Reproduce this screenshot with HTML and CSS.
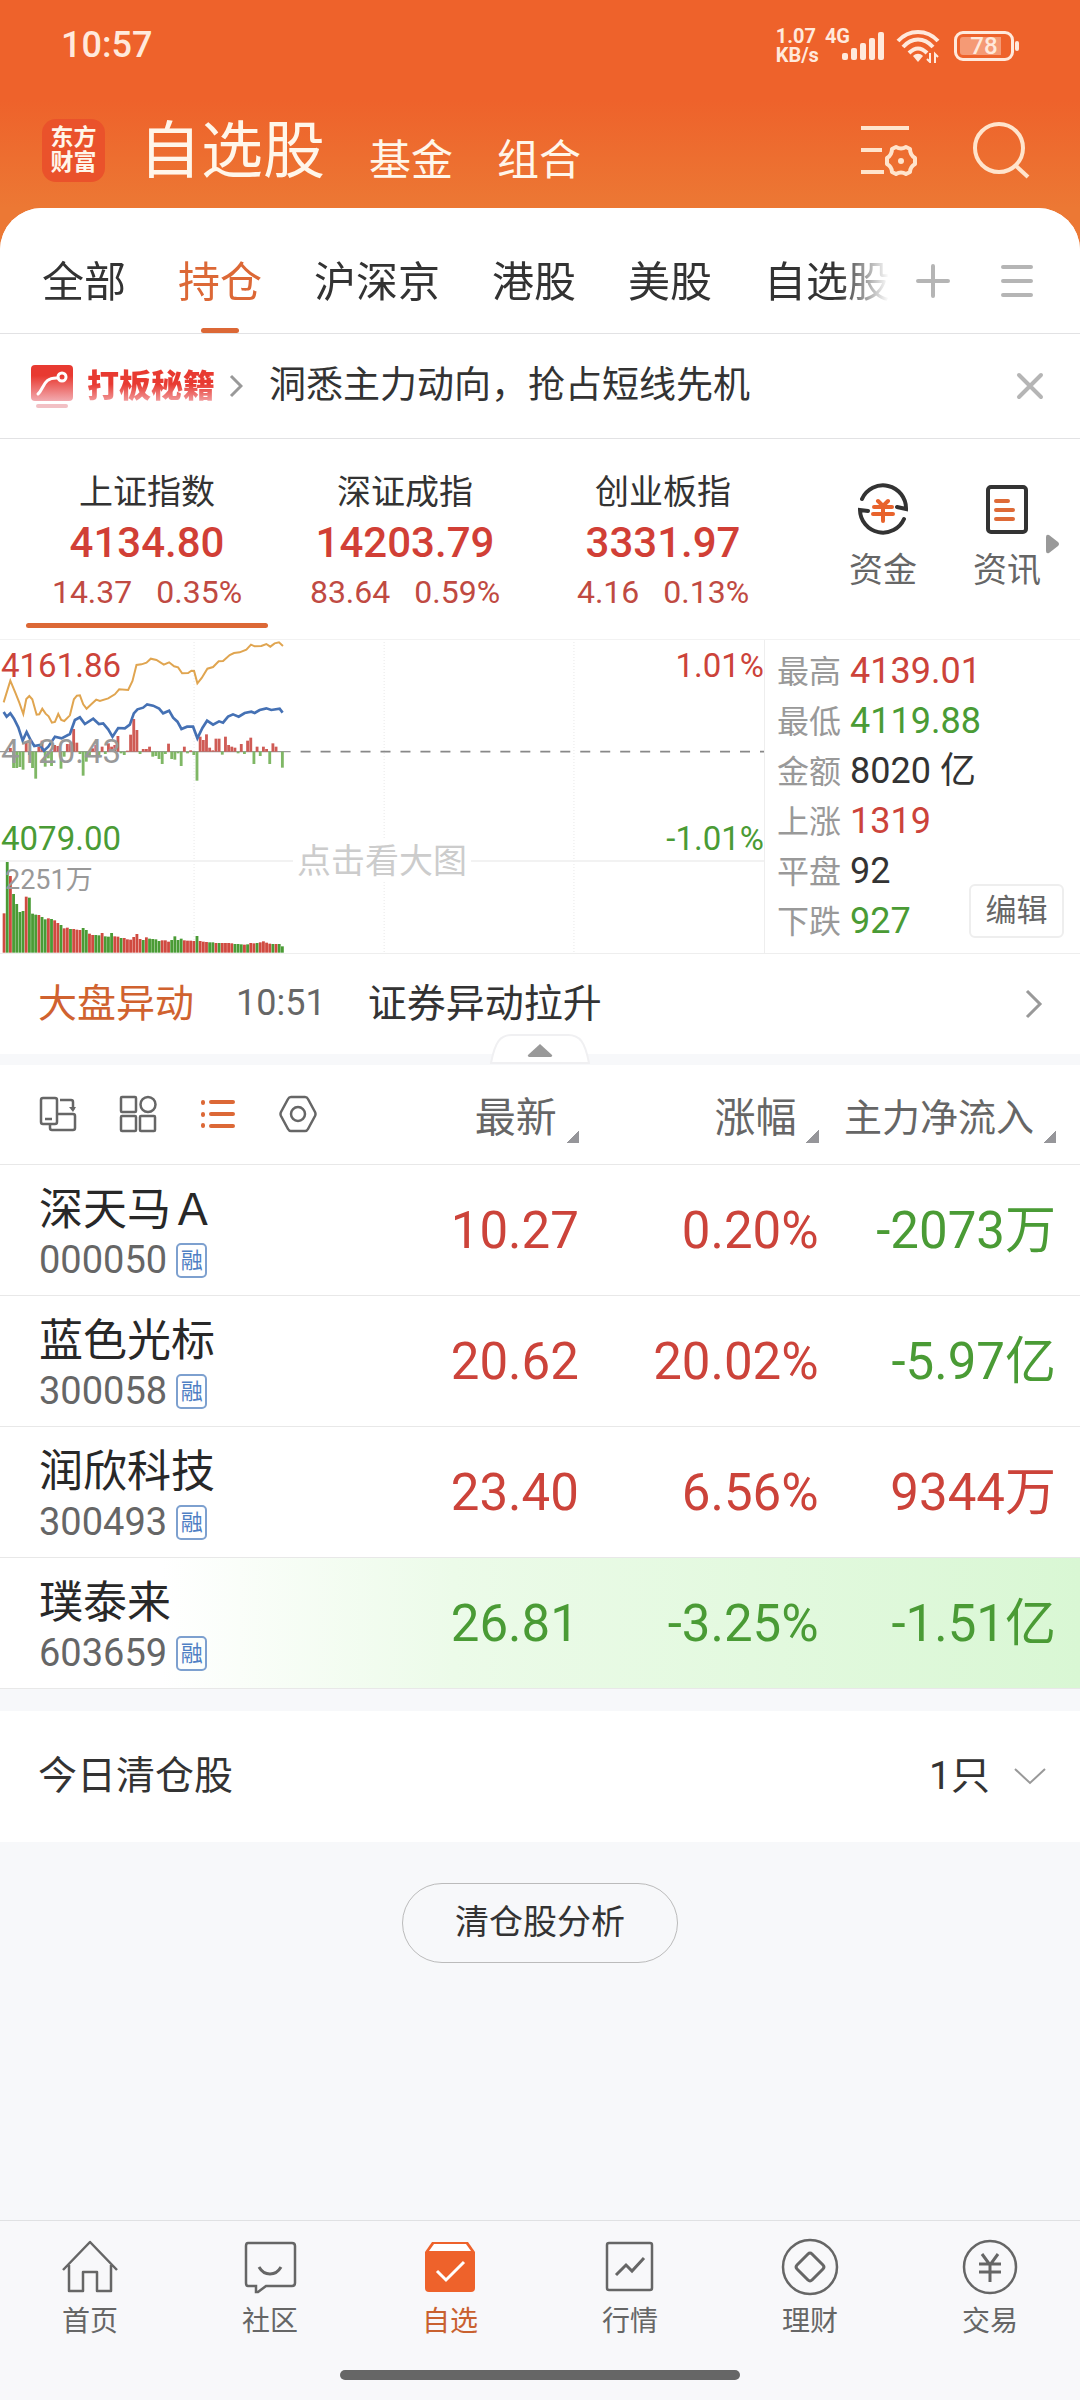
FILE: index.html
```html
<!DOCTYPE html>
<html lang="zh-CN">
<head>
    <meta charset="UTF-8">
    <meta name="viewport" content="width=device-width, initial-scale=1.0">
    <title>自选股</title>
    <link rel="stylesheet" href="styles.css">
</head>
<body>

    <header class="top">
        <div class="status">
            <span class="clock">10:57</span>
            <div class="status-right">
                <span class="speed">1.07<br>KB/s</span>
                <span class="net">4G</span>
                <svg class="signal" width="42" height="28" viewBox="0 0 42 28" fill="currentColor">
                    <rect x="0" y="21" width="6" height="7" rx="2"/>
                    <rect x="9" y="16" width="6" height="12" rx="2"/>
                    <rect x="18" y="11" width="6" height="17" rx="2"/>
                    <rect x="27" y="6" width="6" height="22" rx="2"/>
                    <rect x="36" y="0" width="6" height="28" rx="2"/>
                </svg>
                <svg class="wifi" width="44" height="34" viewBox="0 0 44 34" fill="none" stroke="currentColor" stroke-width="4">
                    <path d="M2 12C13 0 31 0 42 12M7 18C16 8 28 8 37 18M13 24C19 18 25 18 31 24"/>
                    <path d="M17 27C20 24 24 24 27 27L22 33Z" fill="currentColor" stroke="none"/>
                    <path d="M34 24V33L31 30M39 34V25L42 28" stroke-width="2"/>
                </svg>
                <span class="battery"><span class="battery-text">78</span></span>
            </div>
        </div>
        <div class="title-bar">
            <div class="logo">东方<br>财富</div>
            <h1>自选股</h1>
            <a href="#" class="section">基金</a>
            <a href="#" class="section">组合</a>
            <div class="title-actions">
                <button aria-label="设置">
                    <svg width="58" height="52" viewBox="0 0 58 52" fill="none" stroke="currentColor" stroke-width="4">
                        <path d="M1 4H49M1 26H22M1 48H24"/>
                        <path d="M36 23Q41 26 46 23L50 25Q50 31 55 34V40Q50 43 50 48L46 50Q41 47 36 50L32 48Q32 43 27 40V34Q32 31 32 25Z" stroke-linejoin="round"/>
                        <circle cx="41" cy="37" r="3" fill="currentColor" stroke="none"/>
                    </svg>
                </button>
                <button aria-label="搜索">
                    <svg width="58" height="58" viewBox="0 0 58 58" fill="none" stroke="currentColor" stroke-width="4">
                        <circle cx="27" cy="27" r="24"/>
                        <path d="M43 44L56 56"/>
                    </svg>
                </button>
            </div>
        </div>
    </header>

    <main>
        <nav class="tabs">
            <div class="tab-list">
                <a href="#">全部</a>
                <a href="#" class="active">持仓</a>
                <a href="#">沪深京</a>
                <a href="#">港股</a>
                <a href="#">美股</a>
                <a href="#">自选股</a>
            </div>
            <button aria-label="添加">
                <svg width="34" height="34" viewBox="0 0 34 34" stroke="currentColor" stroke-width="4" stroke-linecap="round"><path d="M17 2V32M2 17H32"/></svg>
            </button>
            <button aria-label="菜单">
                <svg width="34" height="34" viewBox="0 0 34 34" stroke="currentColor" stroke-width="4" stroke-linecap="round"><path d="M3 3H31M3 17H31M3 31H31"/></svg>
            </button>
        </nav>

        <div class="promo">
            <svg width="42" height="43" viewBox="0 0 42 43" fill="none">
                <defs>
                    <linearGradient id="promoFill" x1="0" y1="0" x2="0" y2="1">
                        <stop offset="0.3" stop-color="#e83a31"/>
                        <stop offset="1" stop-color="#f2abb0"/>
                    </linearGradient>
                </defs>
                <rect width="42" height="36" rx="4" fill="url(#promoFill)"/>
                <rect x="5" y="39" width="32" height="4" rx="2" fill="#f2c0c4"/>
                <path d="M7 29C13 24 12 12 27 13" stroke="#fff" stroke-width="3" stroke-linecap="round"/>
                <circle cx="31" cy="12" r="4" stroke="#fff" stroke-width="3"/>
            </svg>
            <strong>打板秘籍</strong>
            <svg width="14" height="24" viewBox="0 0 14 24" fill="none" stroke="#999" stroke-width="3"><path d="M2 2L12 12L2 22"/></svg>
            <a href="#">洞悉主力动向，抢占短线先机</a>
            <button aria-label="关闭">
                <svg width="28" height="28" viewBox="0 0 28 28" stroke="currentColor" stroke-width="4" stroke-linecap="round"><path d="M3 3L25 25M25 3L3 25"/></svg>
            </button>
        </div>

        <section class="indices">
            <a href="#" class="index active">
                <span class="index-name">上证指数</span>
                <span class="index-value">4134.80</span>
                <span class="index-change"><span>14.37</span><span>0.35%</span></span>
            </a>
            <a href="#" class="index">
                <span class="index-name">深证成指</span>
                <span class="index-value">14203.79</span>
                <span class="index-change"><span>83.64</span><span>0.59%</span></span>
            </a>
            <a href="#" class="index">
                <span class="index-name">创业板指</span>
                <span class="index-value">3331.97</span>
                <span class="index-change"><span>4.16</span><span>0.13%</span></span>
            </a>
            <div class="shortcuts">
                <a href="#">
                    <svg width="54" height="54" viewBox="0 0 54 54" fill="none" stroke="#333" stroke-width="4">
                        <path d="M6 17A23 23 0 0 1 50 27L41 25M48 37A23 23 0 0 1 4 28L12 29" stroke-linecap="round"/>
                        <path d="M22 19L27 24L32 19M27 24V39M18 25H36M17 32H37" stroke="#e8632c" stroke-linecap="round"/>
                    </svg>
                    资金
                </a>
                <a href="#">
                    <svg width="54" height="54" viewBox="0 0 54 54" fill="none" stroke="#333" stroke-width="4">
                        <rect x="8" y="5" width="38" height="45" rx="3"/>
                        <path d="M16 19H28M16 28H33M16 37H33" stroke="#de6a37" stroke-linecap="round"/>
                    </svg>
                    资讯
                </a>
            </div>
            <svg class="more" width="13" height="20" viewBox="0 0 13 20" fill="#999"><path d="M0 3Q0 0 3 1L12 8Q14 10 12 12L3 19Q0 20 0 17Z"/></svg>
        </section>

        <section class="market">
            <div class="chart">
                <svg id="chart" viewBox="0 30 2295 939" preserveAspectRatio="none" fill="none">
                    <path d="M583 36V966M1154 36V966M1724 36V966" stroke="#e8e8e8" stroke-width="3" stroke-dasharray="3 6"/>
                    <path d="M0 693H2295" stroke="#eee" stroke-width="5"/>
                    <path d="M0 365H873" stroke="#999" stroke-width="4"/>
                    <path d="M873 365H2295" stroke="#888" stroke-width="5" stroke-dasharray="30 30" stroke-dashoffset="30"/>
                    <g id="bars"></g>
                    <polyline stroke="#e0a550" stroke-width="6" points="11,217 31,152 46,188 58,218 70,252 79,207 88,198 97,208 110,254 118,253 127,236 137,251 146,259 156,278 165,276 175,252 184,270 193,273 210,256 222,208 231,197 240,196 250,223 260,236 275,222 289,209 300,213 325,205 345,193 358,178 385,180 398,153 410,105 425,103 440,98 453,86 470,90 492,104 508,97 523,109 535,112 547,130 565,129 575,122 583,123 593,160 606,144 623,116 640,111 657,94 670,93 690,75 703,69 720,67 740,59 754,44 765,49 785,48 800,42 812,50 825,40 838,37 850,48"/>
                    <polyline stroke="#4571b4" stroke-width="8" points="11,246 20,260 31,250 42,266 55,292 68,332 80,306 92,330 103,348 120,345 132,362 145,350 165,320 185,325 210,312 225,270 240,262 255,282 280,266 297,282 310,280 325,298 338,320 355,294 375,295 390,284 402,250 413,238 430,233 442,223 460,227 478,236 490,250 508,242 520,263 533,275 545,297 562,290 580,290 593,325 608,294 622,272 640,284 658,274 670,278 685,260 700,253 717,260 735,249 755,245 765,249 780,240 800,235 815,240 840,236 849,248"/>
                </svg>
                <span class="chart-label high red">4161.86</span>
                <span class="chart-label mid">4120.43</span>
                <span class="chart-label low green">4079.00</span>
                <span class="chart-label high right red">1.01%</span>
                <span class="chart-label low right green">-1.01%</span>
                <span class="chart-volume">2251万</span>
                <button class="chart-open">点击看大图</button>
            </div>
            <div class="stats">
                <dl>
                    <div><dt>最高</dt><dd class="red">4139.01</dd></div>
                    <div><dt>最低</dt><dd class="green">4119.88</dd></div>
                    <div><dt>金额</dt><dd>8020 亿</dd></div>
                    <div><dt>上涨</dt><dd class="red">1319</dd></div>
                    <div><dt>平盘</dt><dd>92</dd></div>
                    <div><dt>下跌</dt><dd class="green">927</dd></div>
                </dl>
                <button class="edit">编辑</button>
            </div>
        </section>

        <a href="#" class="news">
            <span class="news-tag">大盘异动</span>
            <time>10:51</time>
            <span>证券异动拉升</span>
            <svg width="18" height="30" viewBox="0 0 18 30" fill="none" stroke="#999" stroke-width="3"><path d="M2 2L15 15L2 28"/></svg>
        </a>

        <div class="divider">
            <button class="collapse" aria-label="收起">
                <svg width="100" height="30" viewBox="0 0 100 30">
                    <path d="M1 29C5 8 10 1 22 1H78C90 1 95 8 99 29Z" fill="#fff" stroke="#f0f0f2" stroke-width="2"/>
                    <path d="M50 10L62 21Q63 22 61 23H39Q37 22 38 21Z" fill="#999"/>
                </svg>
            </button>
        </div>

        <table class="stocks">
            <thead>
                <tr>
                    <th>
                        <div class="views">
                            <button aria-label="横屏">
                                <svg width="38" height="38" viewBox="0 0 38 38" fill="none" stroke="currentColor" stroke-width="2.5">
                                    <rect x="2" y="3" width="16" height="26" rx="2"/>
                                    <path d="M6 24H13M11 29V33Q11 35 13 35H34Q36 35 36 33V21Q36 19 34 19H18M21 5H32Q34 5 34 7V15"/>
                                    <path d="M30 12H37L34 17Z" fill="currentColor" stroke="none"/>
                                </svg>
                            </button>
                            <button aria-label="宫格">
                                <svg width="38" height="38" viewBox="0 0 38 38" fill="none" stroke="currentColor" stroke-width="2.5">
                                    <rect x="2" y="2" width="15" height="15" rx="1"/>
                                    <circle cx="29" cy="9.5" r="7.5"/>
                                    <rect x="2" y="21" width="15" height="15" rx="1"/>
                                    <rect x="21" y="21" width="15" height="15" rx="1"/>
                                </svg>
                            </button>
                            <button aria-label="列表" class="active">
                                <svg width="38" height="38" viewBox="0 0 38 38" fill="none" stroke="currentColor" stroke-width="4" stroke-linecap="round">
                                    <path d="M4 7V8M4 19V20M4 30V31M12 7H34M12 19H34M12 31H34"/>
                                </svg>
                            </button>
                            <button aria-label="自定义">
                                <svg width="38" height="38" viewBox="0 0 38 38" fill="none" stroke="currentColor" stroke-width="2.5">
                                    <path d="M12 2H26Q28 2 29 4L36 17Q37 19 36 21L29 34Q28 36 26 36H12Q10 36 9 34L2 21Q1 19 2 17L9 4Q10 2 12 2Z"/>
                                    <circle cx="19" cy="19" r="7"/>
                                </svg>
                            </button>
                        </div>
                    </th>
                    <th><button class="sort">最新</button></th>
                    <th><button class="sort">涨幅</button></th>
                    <th><button class="sort wide">主力净流入</button></th>
                </tr>
            </thead>
            <tbody>
                <tr>
                    <td><div class="name">深天马Ａ</div><div class="code">000050<span class="margin-tag">融</span></div></td>
                    <td class="red">10.27</td>
                    <td class="red">0.20%</td>
                    <td class="green">-2073万</td>
                </tr>
                <tr>
                    <td><div class="name">蓝色光标</div><div class="code">300058<span class="margin-tag">融</span></div></td>
                    <td class="red">20.62</td>
                    <td class="red">20.02%</td>
                    <td class="green">-5.97亿</td>
                </tr>
                <tr>
                    <td><div class="name">润欣科技</div><div class="code">300493<span class="margin-tag">融</span></div></td>
                    <td class="red">23.40</td>
                    <td class="red">6.56%</td>
                    <td class="red">9344万</td>
                </tr>
                <tr class="falling">
                    <td><div class="name">璞泰来</div><div class="code">603659<span class="margin-tag">融</span></div></td>
                    <td class="green">26.81</td>
                    <td class="green">-3.25%</td>
                    <td class="green">-1.51亿</td>
                </tr>
            </tbody>
        </table>

        <button class="cleared">
            <span>今日清仓股</span>
            <span class="count">1只</span>
            <svg width="32" height="18" viewBox="0 0 32 18" fill="none" stroke="#999" stroke-width="2"><path d="M1 2L16 16L31 2"/></svg>
        </button>

        <button class="analyse">清仓股分析</button>
    </main>

    <footer class="bottom">
        <nav>
            <a href="#">
                <svg width="58" height="58" viewBox="0 0 58 58" fill="none" stroke="currentColor" stroke-width="2.5">
                    <path d="M2 32L29 4L56 32M8 27V53H22V34H36V53H50V27" stroke-linejoin="round"/>
                </svg>
                首页
            </a>
            <a href="#">
                <svg width="58" height="58" viewBox="0 0 58 58" fill="none" stroke="currentColor" stroke-width="2.5">
                    <path d="M7 5H51Q54 5 54 8V45Q54 48 51 48H25L17 54H15V48H7Q5 48 5 45V8Q5 5 7 5Z"/>
                    <path d="M18 29Q22 36 29 36Q36 36 40 29" stroke-width="3"/>
                </svg>
                社区
            </a>
            <a href="#" class="active">
                <svg width="58" height="58" viewBox="0 0 58 58" fill="none" stroke="#fff" stroke-width="3">
                    <path d="M4 14L11 4H47L54 14V50Q54 54 50 54H8Q4 54 4 50Z" fill="#ee622b" stroke="none"/>
                    <path d="M8 13L13 6H45L50 13Z" fill="#fff" stroke="none"/>
                    <path d="M16 33L25 42L43 24"/>
                </svg>
                自选
            </a>
            <a href="#">
                <svg width="58" height="58" viewBox="0 0 58 58" fill="none" stroke="currentColor" stroke-width="2.5">
                    <rect x="6" y="5" width="45" height="47" rx="2"/>
                    <path d="M15 37L25 27L31 33L43 20" stroke-width="3"/>
                </svg>
                行情
            </a>
            <a href="#">
                <svg width="58" height="58" viewBox="0 0 58 58" fill="none" stroke="currentColor" stroke-width="2.5">
                    <circle cx="29" cy="29" r="27"/>
                    <path d="M27 16Q29 14 31 16L42 27Q44 29 42 31L31 42Q29 44 27 42L16 31Q14 29 16 27Z" stroke-width="3"/>
                </svg>
                理财
            </a>
            <a href="#">
                <svg width="58" height="58" viewBox="0 0 58 58" fill="none" stroke="currentColor" stroke-width="2.5">
                    <circle cx="29" cy="29" r="26"/>
                    <path d="M21 16L29 27L37 16M29 27V44M18 26H40M18 34H40" stroke-width="3"/>
                </svg>
                交易
            </a>
        </nav>
        <div class="home-bar"></div>
    </footer>

    <script src="chart.js"></script>
</body>
</html>
```

FILE: styles.css
```css
* {
    box-sizing: border-box;
}

body {
    margin: 0;
    min-height: 100vh;
    display: flex;
    flex-direction: column;
    font-family: Roboto, 'Noto Sans CJK SC', sans-serif;
    line-height: 1.2;
    background: linear-gradient(#ee622b 100px, #ec7834 208px) no-repeat #f7f8fa;
    background-size: 100% 260px;
    color: #333;
}

a {
    color: inherit;
    text-decoration: none;
}

button {
    padding: 0;
    border: none;
    background: none;
    font-family: inherit;
    line-height: inherit;
    color: inherit;
    cursor: pointer;
}

svg {
    display: block;
    flex: none;
}

.red {
    color: #cc433a;
}

.green {
    color: #4a9b35;
}

/* Header */
.top {
    color: #ffe9dc;
}

.status {
    display: flex;
    justify-content: space-between;
    align-items: center;
    height: 92px;
    padding: 0 66px 0 61px;
}

.clock {
    font-size: 36px;
    font-weight: 500;
}

.status-right {
    display: flex;
    align-items: center;
}

.speed,
.net {
    font-size: 20px;
    line-height: 19px;
    font-weight: 700;
}

.net {
    align-self: flex-start;
    margin-left: 6px;
}

.signal {
    margin-left: -8px;
}

.wifi {
    margin: 0 14px 0 12px;
}

.battery {
    position: relative;
    width: 60px;
    height: 30px;
    padding: 3px;
    border: 3px solid currentColor;
    border-radius: 9px;
    background: linear-gradient(to right, #f59a75 41px, transparent 41px) content-box;
}

.battery::after {
    content: '';
    position: absolute;
    right: -8px;
    top: 7px;
    width: 4px;
    height: 10px;
    border-radius: 2px;
    background: currentColor;
}

.battery-text {
    display: block;
    text-align: center;
    font-size: 24px;
    line-height: 18px;
    font-weight: 500;
}

.title-bar {
    display: flex;
    align-items: center;
    height: 116px;
    padding: 0 50px 0 42px;
    color: #fff6ea;
}

.logo {
    width: 63px;
    height: 63px;
    margin-right: 34px;
    padding-top: 6px;
    border-radius: 14px;
    background: #ea522b;
    text-align: center;
    font-size: 23px;
    line-height: 25px;
    font-weight: 700;
}

.title-bar h1 {
    margin: 0;
    padding-top: 4px;
    font-size: 62px;
    line-height: 72px;
    font-weight: 400;
}

.section {
    margin-left: 44px;
    padding-top: 22px;
    font-size: 42px;
    line-height: 50px;
}

.title-actions {
    display: flex;
    align-items: center;
    gap: 54px;
    margin-left: auto;
    color: #ffe4cc;
}

/* Category tabs */
main {
    background: #f7f8fa;
    border-radius: 42px 42px 0 0;
}

.tabs {
    display: flex;
    align-items: center;
    height: 126px;
    padding-right: 46px;
    border-bottom: 1px solid #e2e2e4;
    border-radius: 42px 42px 0 0;
    background: #fff;
    color: #b5b5b5;
}

.tab-list {
    display: flex;
    flex: 1;
    gap: 52px;
    height: 100%;
    padding-left: 42px;
    overflow: hidden;
    white-space: nowrap;
    color: #333;
    -webkit-mask-image: linear-gradient(to left, transparent, #000 50px);
    mask-image: linear-gradient(to left, transparent, #000 50px);
}

.tab-list a {
    position: relative;
    flex: none;
    padding-top: 50px;
    font-size: 42px;
    line-height: 50px;
}

.tab-list .active {
    color: #dc6836;
}

.tab-list .active::after {
    content: '';
    position: absolute;
    left: 50%;
    bottom: 0;
    width: 38px;
    height: 5px;
    margin-left: -19px;
    border-radius: 3px;
    background: #dc6836;
}

.tabs button {
    margin-left: 27px;
    padding-top: 20px;
}

.tabs button + button {
    margin-left: 50px;
}

/* Promo line */
.promo {
    display: flex;
    align-items: center;
    height: 105px;
    padding: 0 36px 0 31px;
    border-bottom: 1px solid #e2e2e4;
    background: #fff;
    font-size: 37px;
}

.promo strong {
    margin: 0 14px;
    font-size: 32px;
    line-height: 38px;
    font-weight: 900;
    background: linear-gradient(#e83a31 45%, #f2a5a8 95%);
    -webkit-background-clip: text;
    background-clip: text;
    color: transparent;
}

.promo a {
    margin-left: 26px;
}

.promo button {
    margin-left: auto;
    color: #b5b5b5;
}

/* Indices */
.indices {
    position: relative;
    display: flex;
    height: 201px;
    padding: 0 11px 0 18px;
    border-bottom: 1px solid #f2f2f2;
    background: #fff;
}

.index {
    position: relative;
    flex: 258;
    display: flex;
    flex-direction: column;
    align-items: center;
    padding-top: 31px;
}

.index-name {
    font-size: 34px;
    line-height: 44px;
}

.index-value {
    font-size: 42px;
    line-height: 58px;
    font-weight: 500;
    color: #d13f36;
}

.index-change {
    display: flex;
    gap: 24px;
    font-size: 32px;
    line-height: 40px;
    color: #c04a42;
}

.index.active::after {
    content: '';
    position: absolute;
    left: 8px;
    right: 8px;
    bottom: 11px;
    height: 5px;
    border-radius: 3px;
    background: #dc6836;
}

.shortcuts {
    flex: 248;
    display: flex;
    padding-left: 29px;
}

.shortcuts a {
    flex: 1;
    display: flex;
    flex-direction: column;
    align-items: center;
    gap: 12px;
    padding-top: 43px;
    font-size: 34px;
    line-height: 44px;
    color: #666;
}

.more {
    position: absolute;
    right: 21px;
    top: 95px;
}

/* Intraday chart */
.market {
    display: flex;
    height: 314px;
    border-bottom: 1px solid #eee;
    background: #fff;
}

.chart {
    position: relative;
    flex: 764;
    border-right: 1px solid #eee;
}

.chart svg {
    width: 100%;
    height: 313px;
}

.chart-label {
    position: absolute;
    left: 1px;
    font-size: 33px;
    line-height: 40px;
}

.high {
    top: 6px;
}

.mid {
    top: 92px;
    color: #999;
}

.low {
    top: 179px;
}

.right {
    left: auto;
    right: 0;
}

.chart-volume {
    position: absolute;
    left: 5px;
    top: 223px;
    font-size: 27px;
    line-height: 34px;
    color: #999;
}

.chart-open {
    position: absolute;
    left: 50%;
    top: 200px;
    transform: translateX(-50%);
    padding: 0 4px;
    background: #fff;
    font-size: 34px;
    line-height: 42px;
    white-space: nowrap;
    color: #ccc;
}

.stats {
    position: relative;
    flex: 303;
    padding: 7px 0 0 12px;
}

.stats dl {
    margin: 0;
}

.stats dl div {
    display: flex;
    align-items: center;
    gap: 9px;
    height: 50px;
}

.stats dt {
    font-size: 32px;
    color: #999;
}

.stats dd {
    margin: 0;
    font-size: 36px;
}

.edit {
    position: absolute;
    right: 16px;
    bottom: 15px;
    width: 95px;
    height: 54px;
    border: 2px solid #eee;
    border-radius: 6px;
    background: #fff;
    font-size: 31px;
    color: #666;
}

/* News */
.news {
    display: flex;
    align-items: center;
    gap: 42px;
    height: 100px;
    padding: 0 37px 0 38px;
    background: #fff;
    font-size: 39px;
}

.news-tag {
    color: #d0622f;
}

.news time {
    font-size: 36px;
    color: #666;
}

.news svg {
    margin-left: auto;
}

.divider {
    position: relative;
    height: 11px;
}

.collapse {
    position: absolute;
    left: 50%;
    bottom: 1px;
    margin-left: -50px;
}

/* Stock table */
.stocks {
    width: 100%;
    table-layout: fixed;
    border-collapse: collapse;
    background: #fff;
}

.stocks th,
.stocks td {
    width: 22.2%;
    height: 131px;
    padding: 2px 0 0;
    border-bottom: 1px solid #e8e8e8;
    font-size: 51px;
    line-height: 60px;
    font-weight: 400;
    text-align: right;
}

.stocks th {
    height: 99px;
    padding: 0;
}

.stocks th:first-child,
.stocks td:first-child {
    width: 31.4%;
    padding-left: 39px;
    text-align: left;
}

.stocks td:first-child {
    padding-top: 9px;
}

.stocks th:last-child,
.stocks td:last-child {
    width: 24.2%;
    padding-right: 24px;
}

.views {
    display: flex;
    gap: 42px;
    color: #666;
}

.views .active {
    color: #dc6836;
}

.sort {
    display: inline-flex;
    gap: 9px;
    vertical-align: middle;
    font-size: 41px;
    line-height: 50px;
    white-space: nowrap;
    color: #666;
}

.sort.wide {
    font-size: 38px;
}

.sort::after {
    content: '';
    align-self: flex-end;
    width: 13px;
    height: 13px;
    background: linear-gradient(135deg, transparent 50%, #96969a 50%);
}

.name {
    font-size: 44px;
    line-height: 52px;
    color: #282828;
}

.code {
    display: flex;
    align-items: center;
    gap: 9px;
    font-size: 38px;
    line-height: 48px;
    color: #666;
}

.margin-tag {
    width: 31px;
    height: 35px;
    border: 2px solid #7da0cf;
    border-radius: 5px;
    text-align: center;
    font-size: 22px;
    line-height: 31px;
    color: #4f80c4;
}

.falling {
    background: linear-gradient(to right, #fff 15%, #ecfbe9 42%, #d9f7d4);
}

/* Cleared positions */
.cleared {
    display: flex;
    align-items: center;
    width: 100%;
    height: 131px;
    margin-top: 22px;
    padding: 0 34px 0 38px;
    background: #fff;
    font-size: 39px;
}

.count {
    margin: 0 24px 0 auto;
}

.analyse {
    display: block;
    height: 80px;
    margin: 41px auto;
    padding: 0 52px;
    border: 1px solid #bbb;
    border-radius: 40px;
    font-size: 34px;
}

/* Bottom navigation */
.bottom {
    margin-top: auto;
    padding-bottom: 20px;
    border-top: 1px solid #e0e1e3;
    background: #f8f8fa;
}

.bottom nav {
    display: flex;
}

.bottom a {
    flex: 1;
    display: flex;
    flex-direction: column;
    align-items: center;
    gap: 8px;
    padding-top: 17px;
    font-size: 28px;
    line-height: 36px;
    color: #666;
}

.bottom .active {
    color: #c9612f;
}

.home-bar {
    width: 37%;
    height: 10px;
    margin: 30px auto 0;
    border-radius: 5px;
    background: #666;
}
```

FILE: chart.js
```javascript
// Volume per minute, negative = falling minute
const volumes = [
    118, -272, 230, -176, -146, -122, -125, 168, -165, -117, -114, 113, -107, -100, 103,
    -101, 97, 89, -83, 73, 75, -71, 71, 69, 68, -74, -68, 57, 53, -53,
    -52, 59, -49, -48, -59, 49, 48, -44, 44, 40, 39, 47, 56, 41, -38,
    46, -42, -41, -40, -35, 37, 37, 33, -38, -49, -38, -42, 37, 36, 36,
    35, -50, 35, 33, 32, -31, -31, 29, -29, 29, 29, 29, 28, -26, -26,
    -25, 24, -25, 29, 28, -29, 31, 34, 30, 27, -26, 26, -26, -19
];

// Momentum bars around the previous close
const momentum = [
    0, 0, 11, -49, -49, -46, -54, 30, -10, -49, -81, 15, 33, -45, -20,
    -43, 20, 17, -51, -15, 23, 25, 68, 27, -7, -72, -30, -13, 10, 20,
    -17, 15, -7, 25, 15, 20, 47, -5, -10, 3, 51, 98, 65, -7, 8,
    8, 15, -15, -13, -22, -37, -7, 24, -22, -24, -5, -43, 15, -5, 4,
    -10, -87, 45, 35, 52, 12, 4, 39, 39, -9, 45, 20, 15, 12, -5,
    23, -7, 33, 42, -37, 15, -13, 15, 8, -37, 25, 15, 0, -48
];

const bars = document.getElementById('bars');

function drawBars(values, base, oneSided, red, green) {
    values.forEach((value, i) => {
        const size = Math.abs(value);
        const rect = document.createElementNS('http://www.w3.org/2000/svg', 'rect');
        rect.setAttribute('x', 8 + i * 9.5);
        rect.setAttribute('y', oneSided || value > 0 ? base - size : base);
        rect.setAttribute('width', 8.5);
        rect.setAttribute('height', size);
        rect.setAttribute('fill', value > 0 ? red : green);
        bars.appendChild(rect);
    });
}

drawBars(momentum, 365, false, '#cf5b55', '#7fb765');
drawBars(volumes, 968, true, '#d04a40', '#4a9b35');
```
